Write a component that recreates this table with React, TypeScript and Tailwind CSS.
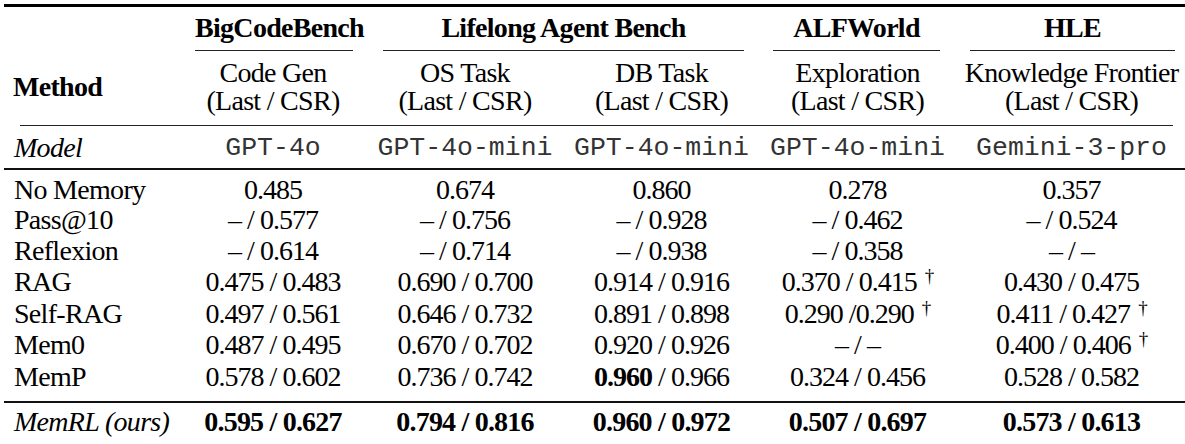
import React from "react";

const cols = "grid grid-cols-[178px_182px_202px_191px_201px_227px]";

type Cell = React.ReactNode;

const Dag = () => (
  <span className="inline-block text-[19px] leading-none ml-[8px] relative top-[-9px]">†</span>
);

const B = ({ children }: { children: React.ReactNode }) => <span className="font-bold">{children}</span>;

const rows: { name: Cell; cells: Cell[]; lh: string }[] = [
  { name: "No Memory", cells: ["0.485", "0.674", "0.860", "0.278", "0.357"], lh: "h-[30px] leading-[30px]" },
  { name: "Pass@10", cells: ["– / 0.577", "– / 0.756", "– / 0.928", "– / 0.462", "– / 0.524"], lh: "h-[30px] leading-[30px]" },
  { name: "Reflexion", cells: ["– / 0.614", "– / 0.714", "– / 0.938", "– / 0.358", "– / –"], lh: "h-[31px] leading-[31px]" },
  {
    name: "RAG",
    cells: ["0.475 / 0.483", "0.690 / 0.700", "0.914 / 0.916", <>0.370 / 0.415<Dag /></>, "0.430 / 0.475"],
    lh: "h-[32px] leading-[32px]",
  },
  {
    name: "Self-RAG",
    cells: ["0.497 / 0.561", "0.646 / 0.732", "0.891 / 0.898", <>0.290 /0.290<Dag /></>, <>0.411 / 0.427<Dag /></>],
    lh: "h-[31px] leading-[31px]",
  },
  {
    name: "Mem0",
    cells: ["0.487 / 0.495", "0.670 / 0.702", "0.920 / 0.926", "– / –", <>0.400 / 0.406<Dag /></>],
    lh: "h-[32px] leading-[32px]",
  },
  {
    name: "MemP",
    cells: ["0.578 / 0.602", "0.736 / 0.742", <><B>0.960</B> / 0.966</>, "0.324 / 0.456", "0.528 / 0.582"],
    lh: "h-[32px] leading-[32px]",
  },
];

export default function App() {
  return (
    <div
      className="bg-white w-[1185px] h-[444px] overflow-hidden text-black text-[28px] tracking-[-0.7px]"
      style={{ fontFamily: '"Liberation Serif", "Times New Roman", serif' }}
    >
      <div className="ml-[4px] w-[1181px]">
        <div className="mt-[4px] h-[3px] bg-black" />

        {/* header group row */}
        <div className={`${cols} pt-[6px]`}>
          <div />
          <div className="flex flex-col">
            <div className="ml-[13px] mr-[11px] text-center font-bold leading-[30px] whitespace-nowrap">BigCodeBench</div>
            <div className="ml-[13px] mr-[11px] mt-[7px] h-[1px] bg-[#222]" />
          </div>
          <div className="col-span-2 flex flex-col">
            <div className="ml-[19px] mr-[13px] text-center font-bold leading-[30px] whitespace-nowrap">Lifelong Agent Bench</div>
            <div className="ml-[19px] mr-[13px] mt-[7px] h-[1px] bg-[#222]" />
          </div>
          <div className="flex flex-col">
            <div className="ml-[16px] mr-[18px] text-center font-bold leading-[30px] whitespace-nowrap">ALFWorld</div>
            <div className="ml-[16px] mr-[18px] mt-[7px] h-[1px] bg-[#222]" />
          </div>
          <div className="flex flex-col">
            <div className="ml-[12px] mr-[10px] text-center font-bold leading-[30px] whitespace-nowrap">HLE</div>
            <div className="ml-[12px] mr-[10px] mt-[7px] h-[1px] bg-[#222]" />
          </div>
        </div>

        {/* sub header */}
        <div className={`${cols} pt-[8px] pb-[10px] leading-[28px]`}>
          <div className="flex items-center pl-[9px] font-bold">Method</div>
          {[
            ["Code Gen", "(Last / CSR)"],
            ["OS Task", "(Last / CSR)"],
            ["DB Task", "(Last / CSR)"],
            ["Exploration", "(Last / CSR)"],
            ["Knowledge Frontier", "(Last / CSR)"],
          ].map(([a, b], i) => (
            <div key={i} className="flex flex-col items-center whitespace-nowrap">
              <div>{a}</div>
              <div>{b}</div>
            </div>
          ))}
        </div>
        <div className="ml-[16px] mr-[12px] h-[1px] bg-[#222]" />

        {/* model row */}
        <div className={`${cols} leading-[30px] pt-[7px] pb-[5px]`}>
          <div className="pl-[10px] italic">Model</div>
          {["GPT-4o", "GPT-4o-mini", "GPT-4o-mini", "GPT-4o-mini", "Gemini-3-pro"].map((m, i) => (
            <div
              key={i}
              className="text-center whitespace-nowrap text-[26.5px] tracking-normal text-[#333]"
              style={{ fontFamily: '"Liberation Mono", "Courier New", monospace' }}
            >
              {m}
            </div>
          ))}
        </div>
        <div className="h-[2px] bg-[#111]" />

        {/* body */}
        <div className="pt-[5px] pb-[8px]">
          {rows.map((r, i) => (
            <div key={i} className={`${cols} ${r.lh}`}>
              <div className="pl-[10px] whitespace-nowrap">{r.name}</div>
              {r.cells.map((c, j) => (
                <div key={j} className="text-center whitespace-nowrap tracking-[-1px]">
                  {c}
                </div>
              ))}
            </div>
          ))}
        </div>
        <div className="h-[2px] bg-[#111]" />

        <div className={`${cols} h-[33px] pt-[4px] leading-[30px]`}>
          <div className="pl-[10px] italic whitespace-nowrap">MemRL (ours)</div>
          {["0.595 / 0.627", "0.794 / 0.816", "0.960 / 0.972", "0.507 / 0.697", "0.573 / 0.613"].map((c, j) => (
            <div key={j} className="text-center font-bold whitespace-nowrap tracking-[-0.8px]">
              {c}
            </div>
          ))}
        </div>
      </div>
    </div>
  );
}
